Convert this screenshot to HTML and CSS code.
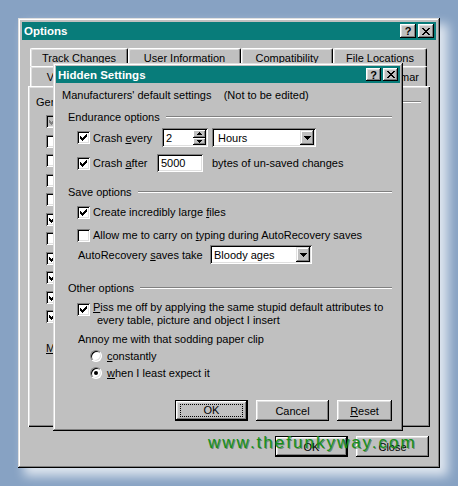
FILE: index.html
```html
<!DOCTYPE html>
<html>
<head>
<meta charset="utf-8">
<title>Options</title>
<link rel="stylesheet" href="styles.css">
</head>
<body>
<div class="desk">
  <div class="win options">
    <div class="titlebar">
      <span class="title">Options</span>
      <span class="tbtns">
        <span class="tbtn">?</span>
        <span class="tbtn"><svg width="8" height="7" viewBox="0 0 8 7" shape-rendering="crispEdges"><path d="M0 0h2v1H0zM6 0h2v1H6zM1 1h2v1H1zM5 1h2v1H5zM2 2h4v1H2zM3 3h2v1H3zM2 4h4v1H2zM1 5h2v1H1zM5 5h2v1H5zM0 6h2v1H0zM6 6h2v1H6z"/></svg></span>
      </span>
    </div>

    <div class="tabrow back">
      <div class="tab w-track">Track Changes</div>
      <div class="tab w-user">User Information</div>
      <div class="tab w-compat">Compatibility</div>
      <div class="tab w-files">File Locations</div>
    </div>
    <div class="tabrow front">
      <div class="tab w-view">View</div>
      <div class="tab w-gen">General</div>
      <div class="tab w-edit">Edit</div>
      <div class="tab w-print">Print</div>
      <div class="tab w-save">Save</div>
      <div class="tab w-spell">Spelling &amp; Grammar</div>
    </div>

    <div class="panel">
      <div class="glegend"><span>General options</span><i class="rule"></i></div>
      <div class="plist">
        <div class="prow"><span class="cb dim"><svg width="13" height="13" viewBox="0 0 13 13" shape-rendering="crispEdges"><path class="ck-dim" d="M9 3h1v1H9zM8 4h2v1H8zM3 5h1v1H3zM7 5h3v1H7zM3 6h2v1H3zM6 6h3v1H6zM3 7h5v1H3zM4 8h3v1H4zM5 9h1v1H5z"/></svg></span><span>Background repagination</span></div>
        <div class="prow"><span class="cb"></span><span>Help for WordPerfect users</span></div>
        <div class="prow"><span class="cb"></span><span>Navigation keys for WordPerfect users</span></div>
        <div class="prow"><span class="cb"></span><span>Blue background, white text</span></div>
        <div class="prow"><span class="cb"></span><span>Provide feedback with sound</span></div>
        <div class="prow"><span class="cb"><svg width="13" height="13" viewBox="0 0 13 13" shape-rendering="crispEdges"><path d="M9 3h1v1H9zM8 4h2v1H8zM3 5h1v1H3zM7 5h3v1H7zM3 6h2v1H3zM6 6h3v1H6zM3 7h5v1H3zM4 8h3v1H4zM5 9h1v1H5z"/></svg></span><span>Provide feedback with animation</span></div>
        <div class="prow"><span class="cb"></span><span>Confirm conversion at Open</span></div>
        <div class="prow"><span class="cb"><svg width="13" height="13" viewBox="0 0 13 13" shape-rendering="crispEdges"><path d="M9 3h1v1H9zM8 4h2v1H8zM3 5h1v1H3zM7 5h3v1H7zM3 6h2v1H3zM6 6h3v1H6zM3 7h5v1H3zM4 8h3v1H4zM5 9h1v1H5z"/></svg></span><span>Update automatic links at Open</span></div>
        <div class="prow"><span class="cb"><svg width="13" height="13" viewBox="0 0 13 13" shape-rendering="crispEdges"><path d="M9 3h1v1H9zM8 4h2v1H8zM3 5h1v1H3zM7 5h3v1H7zM3 6h2v1H3zM6 6h3v1H6zM3 7h5v1H3zM4 8h3v1H4zM5 9h1v1H5z"/></svg></span><span>Mail as attachment</span></div>
        <div class="prow"><span class="cb"><svg width="13" height="13" viewBox="0 0 13 13" shape-rendering="crispEdges"><path d="M9 3h1v1H9zM8 4h2v1H8zM3 5h1v1H3zM7 5h3v1H7zM3 6h2v1H3zM6 6h3v1H6zM3 7h5v1H3zM4 8h3v1H4zM5 9h1v1H5z"/></svg></span><span>Recently used file list</span></div>
        <div class="prow"><span class="cb"><svg width="13" height="13" viewBox="0 0 13 13" shape-rendering="crispEdges"><path d="M9 3h1v1H9zM8 4h2v1H8zM3 5h1v1H3zM7 5h3v1H7zM3 6h2v1H3zM6 6h3v1H6zM3 7h5v1H3zM4 8h3v1H4zM5 9h1v1H5z"/></svg></span><span>Macro virus protection</span></div>
        <div class="prow units"><span><u>M</u>easurement units:</span></div>
      </div>
    </div>

    <div class="btnrow outer">
      <span class="btn def">OK</span>
      <span class="btn">Close</span>
    </div>

    <!-- second dialog window, floating over the Options window -->
    <div class="win hidden-dlg">
      <div class="titlebar small">
        <span class="title">Hidden Settings</span>
        <span class="tbtns">
          <span class="tbtn sm">?</span>
          <span class="tbtn sm"><svg width="8" height="7" viewBox="0 0 8 7" shape-rendering="crispEdges"><path d="M0 0h2v1H0zM6 0h2v1H6zM1 1h2v1H1zM5 1h2v1H5zM2 2h4v1H2zM3 3h2v1H3zM2 4h4v1H2zM1 5h2v1H1zM5 5h2v1H5zM0 6h2v1H0zM6 6h2v1H6z"/></svg></span>
        </span>
      </div>
      <div class="hbody">
        <div class="note">Manufacturers' default settings &nbsp;&nbsp;&nbsp;(Not to be edited)</div>

        <div class="legend l-endur"><span>Endurance options</span><i class="rule"></i></div>
        <div class="row r-every">
          <label class="chk lw-every"><span class="cb"><svg width="13" height="13" viewBox="0 0 13 13" shape-rendering="crispEdges"><path d="M9 3h1v1H9zM8 4h2v1H8zM3 5h1v1H3zM7 5h3v1H7zM3 6h2v1H3zM6 6h3v1H6zM3 7h5v1H3zM4 8h3v1H4zM5 9h1v1H5z"/></svg></span><span>Crash <u>e</u>very</span></label>
          <span class="field spin"><span class="val">2</span><span class="spinbtns"><b class="sb"><svg width="5" height="3" viewBox="0 0 5 3" shape-rendering="crispEdges"><path d="M2 0h1v1h1v1h1v1H0V2h1V1h1z"/></svg></b><b class="sb"><svg width="5" height="3" viewBox="0 0 5 3" shape-rendering="crispEdges"><path d="M0 0h5v1H4v1H3v1H2V2H1V1H0z"/></svg></b></span></span>
          <span class="field combo c-hours"><span class="val">Hours</span><b class="drop"><svg width="7" height="4" viewBox="0 0 7 4" shape-rendering="crispEdges"><path d="M0 0h7v1H6v1H5v1H4v1H3V3H2V2H1V1H0z"/></svg></b></span>
        </div>
        <div class="row r-after">
          <label class="chk lw-after"><span class="cb"><svg width="13" height="13" viewBox="0 0 13 13" shape-rendering="crispEdges"><path d="M9 3h1v1H9zM8 4h2v1H8zM3 5h1v1H3zM7 5h3v1H7zM3 6h2v1H3zM6 6h3v1H6zM3 7h5v1H3zM4 8h3v1H4zM5 9h1v1H5z"/></svg></span><span>Crash <u>a</u>fter</span></label>
          <span class="field num"><span class="val">5000</span></span>
          <span class="after-txt">bytes of un-saved changes</span>
        </div>

        <div class="legend l-save"><span>Save options</span><i class="rule"></i></div>
        <div class="row r-create">
          <label class="chk"><span class="cb"><svg width="13" height="13" viewBox="0 0 13 13" shape-rendering="crispEdges"><path d="M9 3h1v1H9zM8 4h2v1H8zM3 5h1v1H3zM7 5h3v1H7zM3 6h2v1H3zM6 6h3v1H6zM3 7h5v1H3zM4 8h3v1H4zM5 9h1v1H5z"/></svg></span><span>Create incredibly large <u>f</u>iles</span></label>
        </div>
        <div class="row r-allow">
          <label class="chk"><span class="cb"></span><span>Allow me to carry on <u>t</u>yping during AutoRecovery saves</span></label>
        </div>
        <div class="row r-auto">
          <span class="auto-lbl">AutoRecovery <u>s</u>aves take</span>
          <span class="field combo c-ages"><span class="val">Bloody ages</span><b class="drop"><svg width="7" height="4" viewBox="0 0 7 4" shape-rendering="crispEdges"><path d="M0 0h7v1H6v1H5v1H4v1H3V3H2V2H1V1H0z"/></svg></b></span>
        </div>

        <div class="legend l-other"><span>Other options</span><i class="rule"></i></div>
        <div class="row r-piss">
          <label class="chk top"><span class="cb"><svg width="13" height="13" viewBox="0 0 13 13" shape-rendering="crispEdges"><path d="M9 3h1v1H9zM8 4h2v1H8zM3 5h1v1H3zM7 5h3v1H7zM3 6h2v1H3zM6 6h3v1H6zM3 7h5v1H3zM4 8h3v1H4zM5 9h1v1H5z"/></svg></span><span class="wrap"><u>P</u>iss me off by applying the same stupid default attributes to every table, picture and object I insert</span></label>
        </div>
        <div class="row r-annoy"><span class="auto-lbl">Annoy me with that sodding paper clip</span></div>
        <div class="row r-radio r-const"><label class="rad"><span class="rd"></span><span><u>c</u>onstantly</span></label></div>
        <div class="row r-radio r-when"><label class="rad"><span class="rd on"></span><span><u>w</u>hen I least expect it</span></label></div>

        <div class="btnrow inner">
          <span class="btn def"><span class="focus">OK</span></span>
          <span class="btn">Cancel</span>
          <span class="btn narrow"><span><u>R</u>eset</span></span>
        </div>
      </div>
    </div>

    <div class="stamp">www.thefunkyway.com</div>
  </div>
</div>
</body>
</html>
```

FILE: styles.css
```css
* { box-sizing: border-box; }

html, body { margin: 0; padding: 0; }

body {
  width: 458px;
  height: 486px;
  overflow: hidden;
  background: #87a2c3;
  font-family: "Liberation Sans", Arial, sans-serif;
  font-size: 11px;
  color: #000;
}

u { text-decoration: underline; text-underline-offset: 1px; }

.desk { padding: 18px 0 0 18px; }

/* ---- window chrome ---- */
.win {
  background: #c0c0c0;
  box-shadow:
    inset -1px -1px #000,
    inset 1px 1px #dfdfdf,
    inset -2px -2px #808080,
    inset 2px 2px #fff;
}

.options {
  position: relative;
  width: 422px;
  height: 450px;
  padding: 4px;
  display: flex;
  flex-direction: column;
  box-shadow:
    inset -1px -1px #000,
    inset 1px 1px #dfdfdf,
    inset -2px -2px #808080,
    inset 2px 2px #fff,
    7px 7px 10px 1px rgba(255, 255, 255, 0.72);
}

.titlebar {
  flex: none;
  height: 18px;
  background: #087c7a;
  color: #fff;
  display: flex;
  align-items: center;
  justify-content: space-between;
  padding: 0 2px;
}
.titlebar.small { height: 17px; }

.title {
  font-weight: bold;
  font-size: 11.5px;
  line-height: 14px;
}

.tbtns { display: flex; gap: 2px; }

.tbtn {
  width: 16px;
  height: 14px;
  background: #c0c0c0;
  color: #000;
  font-weight: bold;
  font-size: 11px;
  line-height: 12px;
  display: flex;
  align-items: center;
  justify-content: center;
  box-shadow:
    inset -1px -1px #000,
    inset 1px 1px #fff,
    inset -2px -2px #808080,
    inset 2px 2px #dfdfdf;
}
.tbtn.sm { width: 15px; height: 13px; }
.tbtn svg { display: block; }

/* ---- tabs ---- */
.tabrow {
  display: flex;
  margin-left: 8px;
  flex: none;
}
.tabrow.back { margin-top: 8px; height: 18px; }
.tabrow.front { height: 20px; }

.tab {
  display: flex;
  align-items: center;
  justify-content: center;
  border-top: 1px solid #fff;
  border-left: 1px solid #fff;
  border-right: 1px solid #000;
  border-radius: 2px 2px 0 0;
  box-shadow: inset -1px 0 #808080, inset 1px 1px #dfdfdf;
  white-space: nowrap;
}
.w-track { width: 98px; }
.w-user { width: 113px; }
.w-compat { width: 92px; }
.w-files { width: 94px; }
.w-view { width: 57px; }
.w-gen { width: 57px; }
.w-edit { width: 52px; }
.w-print { width: 54px; }
.w-save { width: 62px; }
.w-spell { width: 115px; }

/* ---- tab page ---- */
.panel {
  flex: none;
  margin-left: 6px;
  width: 402px;
  height: 341px;
  padding: 2px 9px 0 8px;
  box-shadow:
    inset 1px 1px #fff,
    inset -1px -1px #000,
    inset -2px -2px #808080,
    inset 2px 2px #dfdfdf;
}

.glegend {
  margin-top: 7px;
  height: 14px;
  display: flex;
  align-items: center;
}
.rule {
  flex: 1;
  height: 2px;
  margin-left: 6px;
  border-top: 1px solid #808080;
  border-bottom: 1px solid #fff;
}

.plist { margin-top: 3px; margin-left: 10px; }
.prow {
  height: 19.5px;
  display: flex;
  align-items: center;
  gap: 4px;
  white-space: nowrap;
}
.prow.units { margin-top: 14px; height: 14px; }

/* ---- controls ---- */
.cb {
  flex: none;
  width: 13px;
  height: 13px;
  background: #fff;
  box-shadow:
    inset 1px 1px #808080,
    inset -1px -1px #fff,
    inset 2px 2px #000,
    inset -2px -2px #dfdfdf;
}
.cb svg { display: block; }
.cb.dim { background: #c0c0c0; }
.ck-dim { fill: #808080; }

.rd {
  flex: none;
  width: 12px;
  height: 12px;
  border-radius: 50%;
  background: #fff;
  border: 1px solid;
  border-color: #808080 #fff #fff #808080;
  box-shadow: inset 1px 1px #000, inset -1px -1px #dfdfdf;
  display: flex;
  align-items: center;
  justify-content: center;
}
.rd.on::after {
  content: "";
  width: 4px;
  height: 4px;
  border-radius: 50%;
  background: #000;
}

.field {
  flex: none;
  display: flex;
  align-items: center;
  background: #fff;
  padding: 2px;
  box-shadow:
    inset 1px 1px #808080,
    inset -1px -1px #fff,
    inset 2px 2px #000,
    inset -2px -2px #dfdfdf;
}
.field .val { flex: 1; padding-left: 2px; white-space: nowrap; }

.spin { width: 46px; height: 19px; }
.spinbtns {
  display: flex;
  flex-direction: column;
  width: 13px;
  height: 15px;
}
.sb {
  flex: 1;
  display: flex;
  align-items: center;
  justify-content: center;
  background: #c0c0c0;
  box-shadow:
    inset -1px -1px #000,
    inset 1px 1px #fff,
    inset -2px -2px #808080;
}
.sb svg { display: block; }

.combo { height: 19px; }
.c-hours { width: 104px; margin-left: 4px; }
.c-hours .val { padding-left: 4px; }
.c-ages { width: 102px; }
.c-ages .val { padding-left: 2px; }

.drop {
  flex: none;
  width: 14px;
  height: 15px;
  display: flex;
  align-items: center;
  justify-content: center;
  background: #c0c0c0;
  box-shadow:
    inset -1px -1px #000,
    inset 1px 1px #dfdfdf,
    inset -2px -2px #808080,
    inset 2px 2px #fff;
}
.drop svg { display: block; }

.num { width: 46px; height: 18px; }

/* ---- hidden settings dialog ---- */
.hidden-dlg {
  position: absolute;
  left: 35px;
  top: 45px;
  width: 350px;
  height: 368px;
  padding: 3px;
  display: flex;
  flex-direction: column;
}

.hbody {
  display: flex;
  flex-direction: column;
  padding: 0 8px 0 6px;
}

.note { margin-top: 5px; height: 14px; line-height: 14px; white-space: nowrap; }

.legend {
  display: flex;
  align-items: center;
  height: 14px;
  padding-left: 6px;
  white-space: nowrap;
}
.l-endur { margin-top: 8px; }
.l-save { margin-top: 13px; }
.l-other { margin-top: 17px; }

.row { display: flex; align-items: center; white-space: nowrap; }

.chk, .rad {
  display: flex;
  align-items: center;
  gap: 3px;
  margin-left: 15px;
}
.rad { gap: 5px; margin-left: 28px; }
.chk.top { align-items: flex-start; }
.chk.top .cb { margin-top: 2px; }
.wrap {
  white-space: normal;
  line-height: 13px;
  padding-left: 4px;
  text-indent: -4px;
  width: 300px;
}

.lw-every { width: 85px; flex: none; }
.lw-after { width: 80px; flex: none; }

.r-every { margin-top: 4px; height: 19px; }
.r-after { margin-top: 7px; height: 18px; }
.after-txt { margin-left: 9px; }
.r-create { margin-top: 6px; height: 14px; }
.r-allow { margin-top: 9px; height: 14px; }
.r-auto { margin-top: 3px; height: 19px; }
.auto-lbl { margin-left: 16px; width: 132px; flex: none; }
.r-annoy .auto-lbl { width: auto; }
.r-piss { margin-top: 6px; height: 26px; align-items: flex-start; }
.r-annoy { margin-top: 5px; height: 14px; }
.r-const { margin-top: 3px; height: 14px; }
.r-when { margin-top: 3px; height: 14px; }

/* ---- push buttons ---- */
.btnrow {
  display: flex;
  justify-content: flex-end;
  gap: 8px;
}
.btnrow.inner { margin-top: 20px; padding-right: 0; }
.btnrow.outer { margin-top: 9px; padding-right: 7px; }

.btn {
  flex: none;
  width: 73px;
  height: 21px;
  display: flex;
  align-items: center;
  justify-content: center;
  background: #c0c0c0;
  box-shadow:
    inset -1px -1px #000,
    inset 1px 1px #fff,
    inset -2px -2px #808080,
    inset 2px 2px #dfdfdf;
}
.btn.narrow { width: 55px; }
.btn.def {
  box-shadow:
    inset 0 0 0 1px #000,
    inset -2px -2px #000,
    inset 2px 2px #fff,
    inset -3px -3px #808080,
    inset 3px 3px #dfdfdf;
}
.focus {
  width: 63px;
  height: 13px;
  line-height: 11px;
  text-align: center;
  border: 1px dotted #000;
}

/* ---- site stamp over the window ---- */
.stamp {
  position: absolute;
  left: 190px;
  top: 415px;
  font-size: 17px;
  line-height: 20px;
  letter-spacing: 2px;
  color: #13901a;
  text-shadow: 1px 1px 0 rgba(0, 60, 0, 0.45);
  white-space: nowrap;
}
```
